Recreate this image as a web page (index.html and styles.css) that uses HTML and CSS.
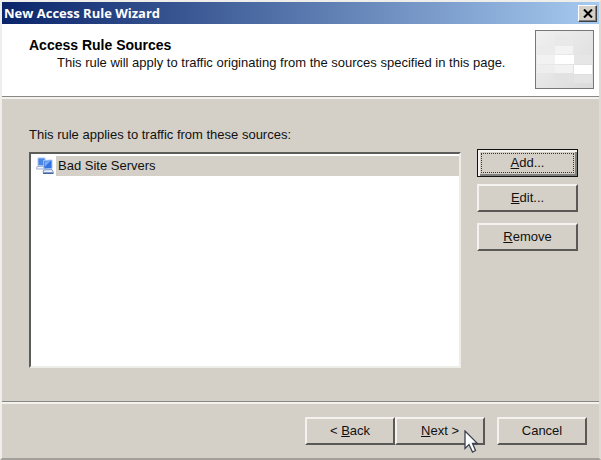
FILE: index.html
```html
<!DOCTYPE html>
<html lang="en">
<head>
<meta charset="UTF-8">
<meta name="viewport" content="width=device-width, initial-scale=1.0">
<title>New Access Rule Wizard</title>
<link rel="stylesheet" href="styles.css">
</head>
<body>

<div class="window">
    <div class="title-bar">
        <h1>New Access Rule Wizard</h1>
        <button class="close-btn" type="button" aria-label="Close">
            <svg width="10" height="9" viewBox="0 0 10 9"><path d="M1 0.5L9 8.5M9 0.5L1 8.5" stroke="#000" stroke-width="2"/></svg>
        </button>
    </div>

    <div class="header">
        <div class="header-text">
            <h2>Access Rule Sources</h2>
            <p>This rule will apply to traffic originating from the sources specified in this page.</p>
        </div>
        <svg class="banner" width="59" height="59" viewBox="0 0 59 59">
            <defs>
                <linearGradient id="shade" x1="0" y1="0" x2="1" y2="1">
                    <stop offset="0" stop-color="#f0f0f0"/>
                    <stop offset="0.5" stop-color="#e6e6e6"/>
                    <stop offset="1" stop-color="#dadada"/>
                </linearGradient>
            </defs>
            <rect x="1" y="1" width="57" height="57" fill="url(#shade)"/>
            <rect x="2" y="16" width="18" height="9" fill="#ebebeb"/>
            <rect x="2" y="25" width="18" height="9" fill="#f2f2f2"/>
            <rect x="2" y="35" width="18" height="8" fill="#eeeeee"/>
            <rect x="20" y="6" width="18" height="9" fill="#e9e9e9"/>
            <rect x="20" y="16" width="18" height="8" fill="#f3f3f3"/>
            <rect x="20" y="25" width="19" height="9" fill="#fff"/>
            <rect x="20" y="35" width="18" height="8" fill="#f2f2f2"/>
            <rect x="20" y="44" width="18" height="8" fill="#e2e2e2"/>
            <rect x="39" y="25" width="18" height="9" fill="#e6e6e6"/>
            <rect x="39" y="35" width="18" height="9" fill="#fff"/>
            <rect x="39" y="45" width="18" height="8" fill="#e4e4e4"/>
            <rect x="0.5" y="0.5" width="58" height="58" fill="none" stroke="#77777b"/>
        </svg>
    </div>

    <div class="content">
        <div class="sources">
            <p class="list-label" id="sourcesLabel">This rule applies to traffic from these sources:</p>
            <ul class="source-list" role="listbox" aria-labelledby="sourcesLabel">
                <li class="source" role="option" aria-selected="true">
                    <svg class="source-icon" width="18" height="18" viewBox="0 0 18 18">
                        <path d="M2 1H9V8.500H2Z" fill="#4a86e6" stroke="#a4c4f4"/>
                        <path d="M1 9.500H8V12H0.500Z" fill="#f2f5fb" stroke="#a3b3d1"/>
                        <path d="M7.500 3.500L16 3V11.500L8 12Z" fill="#3474e2" stroke="#a4c4f4"/>
                        <path d="M8.500 4.500L14.500 4L9 9.500Z" fill="#78abf6"/>
                        <path d="M7.500 13L16 12.500L17.500 15.500H7Z" fill="#eaf0fb" stroke="#7f97c3"/>
                        <path d="M7 16.500H17.500" stroke="#46639d"/>
                    </svg>
                    <span class="source-name">Bad Site Servers</span>
                </li>
            </ul>
        </div>
        <div class="side-buttons">
            <button class="btn default-btn" type="button"><span class="focus-box"><u>A</u>dd...</span></button>
            <button class="btn" type="button"><u>E</u>dit...</button>
            <button class="btn remove-btn" type="button"><u>R</u>emove</button>
        </div>
    </div>

    <div class="footer">
        <div class="nav-buttons">
            <button class="btn" type="button">&lt; <u>B</u>ack</button>
            <button class="btn next-btn" type="button"><u>N</u>ext &gt;
                <svg class="cursor" width="16" height="24" viewBox="0 0 16 24"><path d="M1 1V18.500L5 14.500L8.500 22L11.500 20.500L8.500 13.500H13.500Z" fill="#fff" stroke="#3c4250" stroke-width="1.300"/></svg>
            </button>
        </div>
        <button class="btn" type="button">Cancel</button>
    </div>
</div>

</body>
</html>
```
FILE: styles.css
```css
* {
    box-sizing: border-box;
}

body {
    margin: 0;
    background-color: #d4d0c8;
    font-family: "Liberation Sans", Arial, sans-serif;
    font-size: 13px;
    line-height: 16px;
    color: #111;
}

h1, h2, p, ul {
    margin: 0;
    padding: 0;
}

.window {
    display: flex;
    flex-direction: column;
    min-height: 100vh;
    border: 2px solid #f0eeea;
    border-right-color: #dedbd5;
    border-bottom-color: #a3a09b;
    background-color: #d4d0c8;
}

.title-bar {
    display: flex;
    align-items: center;
    justify-content: space-between;
    height: 22px;
    padding: 0 2px;
    background: linear-gradient(to right, #0a246a, #a6caf0);
}

.title-bar h1 {
    font-family: "Open Sans", Tahoma, sans-serif;
    font-size: 13px;
    line-height: 20px;
    color: #fff;
}

.close-btn {
    display: flex;
    align-items: center;
    justify-content: center;
    width: 19px;
    height: 17px;
    padding: 0;
    border: 1px solid;
    border-color: #fff #404040 #404040 #fff;
    background-color: #d4d0c8;
    box-shadow: inset -1px -1px #808080;
}

.header {
    display: flex;
    justify-content: space-between;
    height: 73px;
    padding: 6px 5px 0 27px;
    background-color: #fff;
    border-bottom: 1px solid #8a8884;
    box-shadow: 0 2px #f4f2ee;
}

.header-text {
    padding-top: 7px;
}

.header h2 {
    font-size: 14px;
    line-height: 16px;
    color: #000;
}

.header p {
    padding: 2px 0 0 28px;
}

.content {
    display: flex;
    flex: 1;
    gap: 16px;
    padding: 30px 21px 33px 27px;
}

.sources {
    display: flex;
    flex: 1;
    flex-direction: column;
}

.list-label {
    margin-bottom: 9px;
}

.source-list {
    flex: 1;
    padding: 2px 0 0 5px;
    list-style: none;
    background-color: #fff;
    border: 2px solid;
    border-color: #5c5c58 #efede8 #efede8 #5c5c58;
}

.source {
    display: flex;
    align-items: center;
}

.source-icon {
    margin-right: 2px;
}

.source-name {
    flex: 1;
    padding: 2px 2px;
    background-color: #d4d0c8;
}

.side-buttons {
    display: flex;
    flex-direction: column;
    width: 101px;
    padding-top: 22px;
}

.btn {
    height: 28px;
    padding: 0;
    font: inherit;
    color: #111;
    background-color: #d4d0c8;
    border: 2px solid;
    border-color: #f4f2ee #5a5955 #5a5955 #f4f2ee;
}

.side-buttons .btn {
    margin-bottom: 7px;
}

.side-buttons .remove-btn {
    margin-top: 4px;
}

.side-buttons .default-btn {
    padding: 1px;
    border: 1px solid #111;
    box-shadow: inset 2px 2px #f4f2ee, inset -2px -2px #808080;
}

.focus-box {
    display: block;
    margin: 2px;
    border: 1px dotted #333;
    line-height: 18px;
}

.footer {
    display: flex;
    justify-content: flex-end;
    gap: 12px;
    padding: 15px 12px 13px;
    border-top: 1px solid #8a8884;
    box-shadow: inset 0 2px #f4f2ee;
}

.nav-buttons {
    display: flex;
}

.footer .btn {
    width: 90px;
}

.next-btn {
    position: relative;
}

.cursor {
    position: absolute;
    left: 67px;
    top: 11px;
}
```
